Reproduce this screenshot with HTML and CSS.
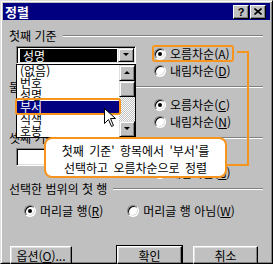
FILE: index.html
```html
<!DOCTYPE html>
<html lang="ko">
<head>
	<meta charset="UTF-8">
	<title>정렬</title>
	<link rel="stylesheet" href="styles.css">
</head>
<body>
	<div class="window">
		<div class="titlebar">
			<span class="title">정렬</span>
			<span class="tb-btn help">?</span>
			<span class="tb-btn close">
				<svg width="8" height="7" viewBox="0 0 8 7"><path d="M0.5 0.5 L7.5 6.5 M7.5 0.5 L0.5 6.5" stroke="#000" stroke-width="1.6" fill="none"/></svg>
			</span>
		</div>
		<div class="dlg">
			<section class="group">
				<div class="legend"><span>첫째 기준</span></div>
				<div class="group-body">
					<div class="combo">
						<div class="combo-field"><span class="sel">성명</span></div>
						<span class="drop-btn"></span>
						<!-- 펼쳐진 목록 -->
						<div class="droplist">
							<ul class="items">
								<li>(없음)</li>
								<li>번호</li>
								<li>성명</li>
								<li class="active">부서</li>
								<li>직책</li>
								<li>호봉</li>
							</ul>
							<div class="vscroll">
								<span class="sb-btn up"></span>
								<span class="sb-thumb"></span>
								<span class="sb-track"></span>
								<span class="sb-btn down"></span>
							</div>
							<span class="mark mark-item"></span>
							<svg class="cursor" width="12" height="19" viewBox="0 0 12 19">
								<path d="M0.5 0.5 L0.5 15.5 L4.5 11.5 L7.5 18.5 L9.5 17.5 L6.5 10.5 L11.5 10.5 Z" fill="#fff" stroke="#000" stroke-width="1"/>
							</svg>
						</div>
					</div>
					<div class="radios">
						<label class="radio on"><i></i><span>오름차순(A)</span><span class="mark mark-radio"></span></label>
						<label class="radio"><i></i><span>내림차순(<u>D</u>)</span></label>
					</div>
				</div>
			</section>
			<section class="group">
				<div class="legend"><span>둘째 기준</span></div>
				<div class="group-body">
					<div class="combo">
						<div class="combo-field"></div>
						<span class="drop-btn"></span>
					</div>
					<div class="radios">
						<label class="radio on"><i></i><span>오름차순(<u>C</u>)</span></label>
						<label class="radio"><i></i><span>내림차순(<u>N</u>)</span></label>
					</div>
				</div>
			</section>
			<section class="group">
				<div class="legend"><span>셋째 기준</span></div>
				<div class="group-body">
					<div class="combo">
						<div class="combo-field"></div>
						<span class="drop-btn"></span>
					</div>
					<div class="radios">
						<label class="radio on"><i></i><span>오름차순(<u>I</u>)</span></label>
						<label class="radio"><i></i><span>내림차순(<u>G</u>)</span></label>
					</div>
				</div>
			</section>
			<section class="group last">
				<div class="legend"><span>선택한 범위의 첫 행</span></div>
				<div class="radio-row">
					<label class="radio on"><i></i><span>머리글 행(<u>R</u>)</span></label>
					<label class="radio"><i></i><span>머리글 행 아님(<u>W</u>)</span></label>
				</div>
			</section>
			<div class="buttons">
				<span class="btn opt"><span>옵션(<u>O</u>)...</span></span>
				<span class="btn ok">확인</span>
				<span class="btn cancel">취소</span>
			</div>
		</div>
	</div>

	<!-- 설명 말풍선 -->
	<div class="callout">첫째 기준' 항목에서 '부서'를<br>선택하고 오름차순으로 정렬</div>
	<span class="conn conn-v"></span>
	<span class="conn conn-h"></span>
</body>
</html>
```
FILE: styles.css
```css
* {
	margin: 0;
	padding: 0;
}
body {
	background-color: #c0c0c0;
	font-family: "Noto Sans CJK KR", "Liberation Sans", sans-serif;
	font-size: 12px;
	color: #000;
}

.window {
	width: 273px;
	height: 264px;
	box-sizing: border-box;
	padding: 2px;
	background-color: #c0c0c0;
	border: 1px solid;
	border-color: #dfdfdf #000 #000 #dfdfdf;
	box-shadow: inset 1px 1px #fff, inset -1px -1px #808080;
}

.titlebar {
	display: flex;
	align-items: center;
	height: 17px;
	padding: 0 4px 0 2px;
	background-color: #000080;
	color: #fff;
}
.titlebar .title {
	flex: 1;
	font-weight: bold;
	font-size: 13px;
	line-height: 17px;
}
.tb-btn {
	display: flex;
	align-items: center;
	justify-content: center;
	width: 16px;
	height: 14px;
	box-sizing: border-box;
	background-color: #c0c0c0;
	border: 1px solid;
	border-color: #fff #000 #000 #fff;
	box-shadow: inset -1px -1px #808080;
	color: #000;
	font-family: "Liberation Sans", sans-serif;
	font-weight: bold;
	font-size: 11px;
	line-height: 12px;
}
.tb-btn.close {
	margin-left: 1px;
}

.dlg {
	padding: 9px 7px 0 6px;
}

.group {
	height: 51px;
}
.legend {
	display: flex;
	align-items: center;
	gap: 6px;
	height: 14px;
	line-height: 14px;
}
.legend::after {
	content: "";
	flex: 1;
	border-top: 1px solid #808080;
	border-bottom: 1px solid #fff;
}
.group-body {
	display: flex;
	align-items: flex-start;
	margin-top: 2px;
}

/* 콤보상자 */
.combo {
	position: relative;
	display: flex;
	width: 120px;
	height: 18px;
	margin: 1px 0 0 7px;
	box-sizing: border-box;
	padding: 2px;
	background-color: #fff;
	border: 1px solid;
	border-color: #808080 #fff #fff #808080;
	box-shadow: inset 1px 1px #000, inset -1px -1px #dfdfdf;
}
.combo-field {
	flex: 1;
	padding: 0 1px;
}
.combo-field .sel {
	display: block;
	height: 13px;
	padding-left: 3px;
	line-height: 13px;
	background-color: #000;
	color: #fff;
}
.drop-btn,
.sb-btn {
	position: relative;
	display: block;
	width: 16px;
	height: 14px;
	box-sizing: border-box;
	background-color: #c0c0c0;
	border: 1px solid;
	border-color: #dfdfdf #000 #000 #dfdfdf;
	box-shadow: inset 1px 1px #fff, inset -1px -1px #808080;
}
.drop-btn {
	margin: -1px -1px 0 0;
}
.drop-btn::after,
.sb-btn::after {
	content: "";
	position: absolute;
	left: 4px;
	top: 4px;
	border-left: 3px solid transparent;
	border-right: 3px solid transparent;
	border-top: 3px solid #000;
}
.sb-btn.up::after {
	border-top: 0;
	border-bottom: 3px solid #000;
}

.droplist {
	position: absolute;
	left: -1px;
	top: 17px;
	display: flex;
	width: 120px;
	height: 74px;
	box-sizing: border-box;
	background-color: #fff;
	border: 1px solid #000;
	z-index: 2;
}
.items {
	flex: 1;
	list-style: none;
}
.items li {
	height: 12px;
	padding-left: 3px;
	line-height: 12px;
}
.items li.active {
	background-color: #000080;
	color: #fff;
}
.vscroll {
	display: flex;
	flex-direction: column;
	width: 16px;
}
.vscroll .sb-btn {
	height: 16px;
}
.vscroll .sb-btn::after {
	top: 5px;
}
.sb-thumb {
	display: block;
	height: 16px;
	box-sizing: border-box;
	background-color: #c0c0c0;
	border: 1px solid;
	border-color: #dfdfdf #000 #000 #dfdfdf;
	box-shadow: inset 1px 1px #fff, inset -1px -1px #808080;
}
.sb-track {
	flex: 1;
	background: repeating-conic-gradient(#c0c0c0 0 25%, #fff 0 50%) 0 0/2px 2px;
}
.cursor {
	position: absolute;
	left: 87px;
	top: 43px;
}

/* 라디오 단추 */
.radios {
	margin-left: 18px;
}
.radio {
	position: relative;
	display: flex;
	align-items: center;
	gap: 4px;
	height: 17px;
	white-space: nowrap;
}
.radio i {
	position: relative;
	width: 12px;
	height: 12px;
	box-sizing: border-box;
	border-radius: 50%;
	background-color: #fff;
	border: 1px solid;
	border-color: #808080 #fff #fff #808080;
	box-shadow: inset 1px 1px #000, inset -1px -1px #dfdfdf;
}
.radio.on i::after {
	content: "";
	position: absolute;
	left: 3px;
	top: 3px;
	width: 4px;
	height: 4px;
	border-radius: 50%;
	background-color: #000;
}
.radio-row {
	display: flex;
	gap: 24px;
	margin: 6px 0 0 15px;
}

.buttons {
	display: flex;
	gap: 11px;
	margin: 13px 5px 0 1px;
}
.btn {
	display: flex;
	align-items: center;
	justify-content: center;
	width: 65px;
	height: 18px;
	box-sizing: border-box;
	background-color: #c0c0c0;
	border: 1px solid;
	border-color: #fff #000 #000 #fff;
	box-shadow: inset -1px -1px #808080, inset 1px 1px #dfdfdf;
}
.btn.opt {
	width: 62px;
	margin-right: auto;
}
.btn.ok {
	outline: 1px solid #000;
}

/* 주석 표시 */
.mark {
	position: absolute;
	box-sizing: border-box;
	border: 2px solid #f7941d;
	border-radius: 3px;
}
.mark-item {
	left: -2px;
	top: 33px;
	width: 106px;
	height: 17px;
}
.mark-radio {
	left: -2px;
	right: -3px;
	top: 0;
	bottom: 0;
}
.callout {
	position: absolute;
	left: 44px;
	top: 137px;
	width: 183px;
	height: 41px;
	box-sizing: border-box;
	padding-top: 3px;
	background-color: #fff;
	border: 2px solid #f7941d;
	border-radius: 8px;
	text-align: center;
	line-height: 17px;
	word-spacing: 2px;
	z-index: 3;
}
.conn {
	position: absolute;
	box-sizing: border-box;
	border-color: #f7941d;
	border-style: solid;
	border-width: 0;
}
.conn-v {
	left: 237px;
	top: 51px;
	width: 12px;
	height: 115px;
	border-top-width: 2px;
	border-right-width: 2px;
}
.conn-h {
	left: 226px;
	top: 164px;
	width: 23px;
	height: 2px;
	border-top-width: 2px;
}
```
